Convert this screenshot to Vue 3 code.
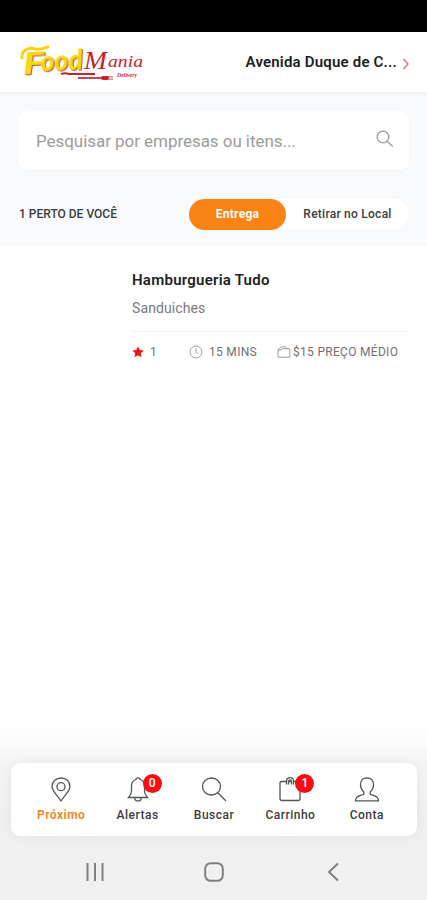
<template>
  <div class="screen">
    <div class="status-bar"></div>

    <header class="header">
      <svg class="logo" width="128" height="42" viewBox="0 0 128 42">
        <text class="logo-food" transform="rotate(-3 32 28)">
          <tspan x="3" y="31.500" font-size="31" textLength="22" lengthAdjust="spacingAndGlyphs">F</tspan><tspan x="21" y="30" font-size="28" textLength="42" lengthAdjust="spacingAndGlyphs">ood</tspan>
        </text>
        <path d="M2 17C1 9 9 6 15 8c6 1 9-1 13-2" fill="none" stroke="#f6d30f" stroke-width="3" stroke-linecap="round" />
        <text class="logo-mania" x="64" y="28" font-size="26" textLength="23" lengthAdjust="spacingAndGlyphs">M</text>
        <text class="logo-mania" x="88" y="26" font-size="17" textLength="35" lengthAdjust="spacingAndGlyphs">ania</text>
        <text class="logo-small" x="97" y="35.500" textLength="20" lengthAdjust="spacingAndGlyphs">Delivery</text>
        <g fill="none" stroke="#c8232c">
          <path d="M41 33q4-1.500 8 0h26" stroke-width="2" />
          <path d="M58 37h25" stroke-width="1.700" />
          <path d="M83 37h4" stroke-width="4" stroke-linecap="round" />
          <path d="M88 35.500h5M88 37h5M88 38.500h5" stroke-width=".5" />
        </g>
      </svg>
      <button class="address">
        <span>Avenida Duque de C...</span>
        <svg width="8" height="12" viewBox="0 0 8 12">
          <path d="M1.500 1l4.500 5-4.500 5" fill="none" stroke="#e46a74" stroke-width="1.300" />
        </svg>
      </button>
    </header>

    <section class="filters">
      <div class="search">
        <span>Pesquisar por empresas ou itens...</span>
        <svg width="18" height="18" viewBox="0 0 18 18">
          <g fill="none" stroke="#999" stroke-width="1.300">
            <circle cx="7" cy="7" r="5.800" />
            <path d="M11.200 11.200l5.500 5.300" />
          </g>
        </svg>
      </div>
      <div class="filter-row">
        <span class="nearby">1 PERTO DE VOCÊ</span>
        <div class="toggle">
          <button
            v-for="m in modes"
            :key="m.value"
            :class="{ active: mode === m.value }"
            @click="mode = m.value"
          >
            {{ m.label }}
          </button>
        </div>
      </div>
    </section>

    <main class="list">
      <article class="store">
        <h2>Hamburgueria Tudo</h2>
        <p>Sanduiches</p>
        <div class="meta">
          <span class="rating">
            <svg width="12" height="12" viewBox="0 0 12 12">
              <path d="M6 .3l1.7 3.6 4 .5-2.9 2.8.7 4L6 9.3l-3.5 1.9.7-4L.3 4.4l4-.5z" fill="#f9120f" />
            </svg>
            <span>1</span>
          </span>
          <span class="time">
            <svg width="14" height="14" viewBox="0 0 14 14">
              <g fill="none" stroke="#949494" stroke-width=".9">
                <circle cx="7" cy="7" r="6" />
                <path d="M7 3v4.500l2 1" />
              </g>
            </svg>
            <span>15 MINS</span>
          </span>
          <span class="price">
            <svg width="14" height="12" viewBox="0 0 14 12">
              <path d="M1 3.500L4.500.8h4.300l1 1.900h3v8.500H1zM1 4h3l1-1.300h4.800" fill="none" stroke="#949494" stroke-width=".9" />
            </svg>
            <span>$15 PREÇO MÉDIO</span>
          </span>
        </div>
      </article>
    </main>

    <footer class="dock">
      <nav class="tabs">
        <button
          v-for="t in tabs"
          :key="t.label"
          :class="{ active: tab === t.label }"
          @click="tab = t.label"
        >
          <span class="icon">
            <svg width="26" height="26" viewBox="0 0 26 26">
              <path v-for="d in t.paths" :key="d" :d="d" />
            </svg>
            <b v-if="t.badge !== undefined" class="badge">{{ t.badge }}</b>
          </span>
          <span class="tab-label">{{ t.label }}</span>
        </button>
      </nav>
    </footer>

    <div class="system-bar">
      <svg width="20" height="20" viewBox="0 0 20 20"><path d="M2.500 1v18M10 1v18M17.500 1v18" /></svg>
      <svg width="20" height="20" viewBox="0 0 20 20"><rect x="1.200" y="1.200" width="17.600" height="17.600" rx="5.500" /></svg>
      <svg width="20" height="20" viewBox="0 0 20 20"><path d="M15 1.500L6 10l9 8.500" /></svg>
    </div>
  </div>
</template>

<script setup>
import { ref } from 'vue'

const mode = ref('delivery')
const tab = ref('Próximo')

const modes = [
  { value: 'delivery', label: 'Entrega' },
  { value: 'pickup', label: 'Retirar no Local' },
]

const tabs = [
  {
    label: 'Próximo',
    paths: [
      'M13 2C7.500 2 4 5.900 4 10.500c0 4.500 5 8.500 9 14.500C17 19 22 15 22 10.500c0-4.600-3.500-8.500-9-8.500z',
      'M13 6.700a4 4 0 1 0 0 8a4 4 0 1 0 0-8z',
    ],
  },
  {
    label: 'Alertas',
    badge: 0,
    paths: [
      'M11 3.500C11 1.200 15 1.200 15 3.500c3.300 1 4.500 3.600 4.500 6.500v5c0 3.300 1 4.200 3 6.500h-19c2-2.300 3-3.200 3-6.500v-5c0-2.900 1.200-5.500 4.500-6.500z',
      'M9.800 21.700c0 4.300 6.400 4.300 6.400 0',
    ],
  },
  {
    label: 'Buscar',
    paths: ['M10.500 2a9 8.500 0 1 0 0 17a9 8.500 0 1 0 0-17z', 'M16.500 16.500l8.500 8.500'],
  },
  {
    label: 'Carrinho',
    badge: 1,
    paths: ['M9.500 5.500h-5a1.500 1.500 0 0 0-1.500 1.500v15.500a2 2 0 0 0 2 2h16a2 2 0 0 0 2-2V7a1.500 1.500 0 0 0-1.500-1.500h-5M11.500 5.500h3', 'M9.500 8.500V5c0-4.500 7-4.500 7 0v3.500M11.500 8.500V5.500c0-2 3-2 3 0v3'],
  },
  {
    label: 'Conta',
    paths: [
      'M13 2c-4 0-6.500 2.500-6.500 6.300 0 3.400 1.300 6.100 3.300 7.600v2.300C7 19.800 1.500 19.500 1.500 24.800h23c0-5.300-5.500-5-8.300-6.600v-2.300c2-1.500 3.300-4.200 3.300-7.600 0-3.800-2.500-6.300-6.500-6.300z',
    ],
  },
]
</script>

<style>
body {
  margin: 0;
  background: #fff;
}
</style>

<style scoped>
.screen {
  height: 900px;
  display: flex;
  flex-direction: column;
  overflow: hidden;
  background: #fff;
  color: #3c3c3c;
  font-family: Roboto, sans-serif;
}
button {
  border: 0;
  padding: 0;
  background: none;
  font-family: inherit;
  color: inherit;
  cursor: pointer;
}
svg {
  flex-shrink: 0;
}
.status-bar {
  height: 32px;
  flex-shrink: 0;
  background: #000;
}
.header {
  height: 60px;
  flex-shrink: 0;
  box-sizing: border-box;
  padding: 0 17px 0 20px;
  display: flex;
  align-items: center;
  justify-content: space-between;
  position: relative;
  background: #fff;
  box-shadow: 0 1px 5px rgba(60, 70, 80, 0.08);
}
.logo {
  overflow: visible;
}
.logo-food {
  font-family: Lato, sans-serif;
  font-style: italic;
  font-weight: 900;
  fill: #f8d714;
  filter: drop-shadow(1px 1px 0 #c4562b);
}
.logo-mania {
  font-family: "Liberation Serif", serif;
  font-style: italic;
  fill: #c8232c;
}
.logo-small {
  font-family: "Liberation Serif", serif;
  font-style: italic;
  font-weight: bold;
  font-size: 6px;
  fill: #c8232c;
}
.address {
  display: flex;
  align-items: center;
  gap: 5px;
  font-size: 15px;
  font-weight: 600;
  letter-spacing: 0.2px;
  color: #202020;
}
.address svg {
  margin-top: 3px;
}
.filters {
  height: 154px;
  flex-shrink: 0;
  box-sizing: border-box;
  padding: 19px 18px 0;
  background: #f8fafc;
}
.search {
  height: 59px;
  box-sizing: border-box;
  padding: 0 15px 0 18px;
  display: flex;
  align-items: center;
  justify-content: space-between;
  border-radius: 9px;
  background: #fff;
  box-shadow: 0 1px 4px rgba(0, 0, 0, 0.02);
  font-size: 17px;
  letter-spacing: -0.05px;
  color: #9b9b9b;
}
.search svg {
  margin-bottom: 4px;
}
.filter-row {
  margin-top: 28px;
  display: flex;
  align-items: center;
  justify-content: space-between;
}
.nearby {
  font-size: 12px;
  font-weight: 500;
  padding-left: 1px;
}
.toggle {
  width: 220px;
  height: 32px;
  display: flex;
  align-items: center;
  border-radius: 16px;
  background: #fff;
  box-shadow: 0 0 2px rgba(0, 0, 0, 0.05);
}
.toggle button {
  flex: 1;
  height: 31px;
  border-radius: 16px;
  font-size: 12px;
  font-weight: 500;
  letter-spacing: 0.25px;
}
.toggle button.active {
  flex: 0 0 97px;
  background: #fb8316;
  color: #fff;
  font-weight: 700;
}
.list {
  flex: 1;
  padding: 25px 18px 0 132px;
}
.store h2 {
  margin: 0;
  font-size: 15px;
  line-height: 18px;
  font-weight: 600;
  letter-spacing: 0.25px;
  color: #222;
}
.store p {
  margin: 10px 0 0;
  padding-bottom: 14px;
  border-bottom: 1px solid #f1f1f1;
  font-size: 14px;
  line-height: 18px;
  letter-spacing: 0.1px;
  color: #7b7b7b;
}
.meta {
  height: 40px;
  display: flex;
  align-items: center;
  font-size: 12px;
  letter-spacing: 0.3px;
  color: #707070;
}
.meta > span {
  display: flex;
  align-items: center;
}
.rating {
  width: 57px;
  gap: 6px;
}
.time {
  width: 88px;
  gap: 6px;
}
.price {
  gap: 2px;
  white-space: nowrap;
}
.dock {
  position: relative;
  flex-shrink: 0;
  padding: 44px 10px 7px 11px;
  background: linear-gradient(#fff, #fafafa 22%, #f4f4f4 36%, #f0f0f0 80%);
}
.tabs {
  height: 73px;
  box-sizing: border-box;
  padding: 13px 12px 0;
  display: flex;
  border-radius: 9px;
  background: #fff;
  box-shadow: 0 0 12px rgba(0, 0, 0, 0.06);
}
.tabs button {
  flex: 1;
  display: flex;
  flex-direction: column;
  align-items: center;
  gap: 4px;
}
.icon {
  position: relative;
  height: 26px;
}
.icon svg {
  display: block;
  fill: none;
  stroke: #555;
  stroke-width: 1.3;
}
.badge {
  position: absolute;
  left: 18px;
  top: -2px;
  width: 19px;
  height: 19px;
  border-radius: 50%;
  background: #fb0c12;
  color: #fff;
  font-size: 12px;
  font-weight: 500;
  line-height: 19px;
  text-align: center;
}
.tab-label {
  font-size: 12px;
  line-height: 18px;
  font-weight: 500;
  letter-spacing: 0.5px;
}
.active .tab-label {
  color: #f28522;
  font-weight: 600;
}
.system-bar {
  height: 57px;
  flex-shrink: 0;
  box-sizing: border-box;
  padding: 0 84px 0 85px;
  display: flex;
  align-items: center;
  justify-content: space-between;
  background: #f0f0f0;
}
.system-bar svg {
  fill: none;
  stroke: #808080;
  stroke-width: 2;
}
</style>
